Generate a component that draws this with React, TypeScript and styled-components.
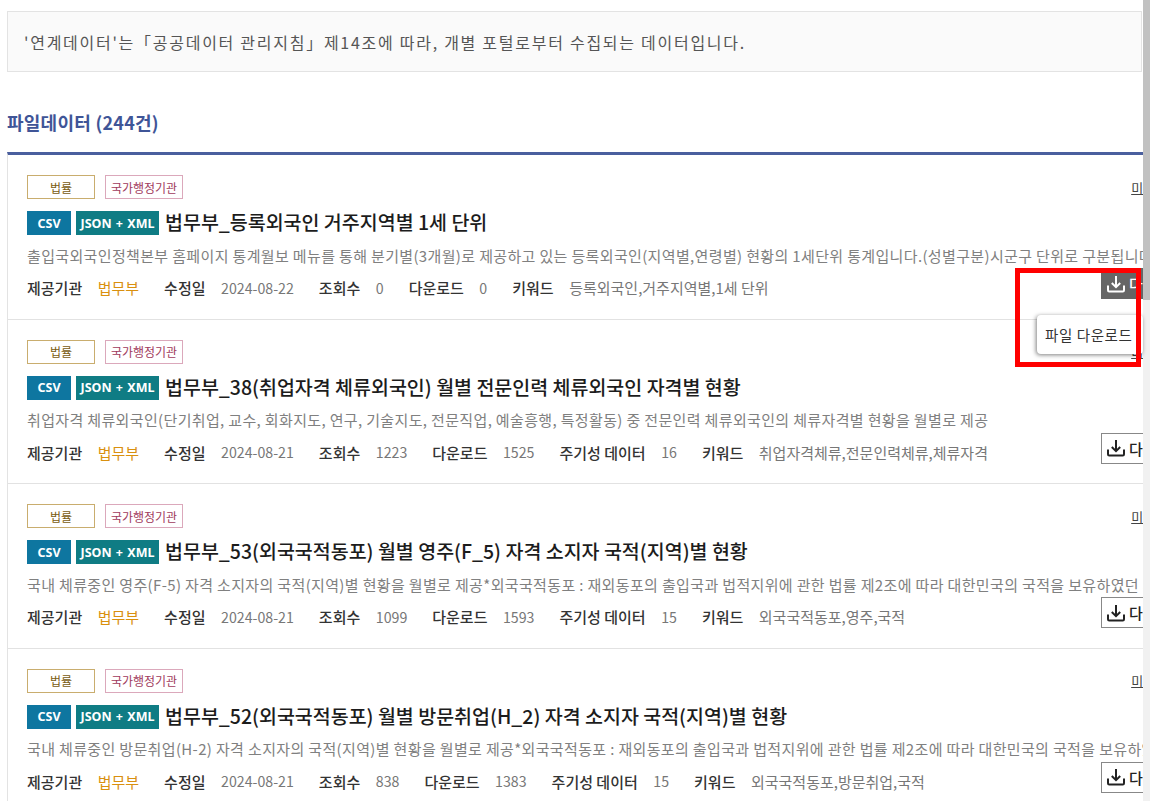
import React from 'react';
import styled, { createGlobalStyle } from 'styled-components';

const Global = createGlobalStyle`
  html, body { margin: 0; padding: 0; height: 100%; overflow: hidden; background: #fff; }
  body { font-family: "Noto Sans CJK KR", "Noto Sans", sans-serif; color: #222; }
`;
const Page = styled.div`
  display: flex; width: 1150px; height: 801px; overflow: hidden; position: relative;
`;
const Main = styled.main`
  width: 1143px; height: 801px; flex: none; overflow: hidden;
  padding: 11px 0 0 7px; box-sizing: border-box;
`;
const ScrollTrack = styled.div`
  width: 7px; flex: none; background: #f1f1f1;
`;
const ScrollThumb = styled.div`
  height: 300px; background: #c1c1c1;
`;
const Notice = styled.div`
  width: 1135px; height: 61px; box-sizing: border-box;
  background: #fafafa; border: 1px solid #e3e3e3;
  display: flex; align-items: center; padding-left: 16px;
  font-size: 16px; letter-spacing: 1.73px; color: #555; white-space: nowrap;
`;
const Heading = styled.h2`
  margin: 36px 0 16px; height: 28px; line-height: 28px;
  font-size: 18px; letter-spacing: .25px; font-weight: 700; color: #3f5597;
`;
const List = styled.div`
  width: 1300px; border-top: 3px solid #4a5f9e; border-left: 1px solid #e3e3e3;
`;
const Row = styled.article`
  box-sizing: border-box; height: 164.5px; width: 1170px;
  padding: 20px 0 0 19px; border-bottom: 1px solid #e2e2e2;
`;
const TopLine = styled.div`
  display: flex; justify-content: space-between; align-items: center; height: 24px;
`;
const Tags = styled.div`
  display: flex; gap: 10px;
`;
const Tag = styled.span<{ $c: string; $b: string; $w: number }>`
  box-sizing: border-box; width: ${p => p.$w}px; height: 24px;
  display: flex; align-items: center; justify-content: center;
  font-size: 12px; color: ${p => p.$c}; border: 1px solid ${p => p.$b};
`;
const MoreLink = styled.a`
  font-size: 13px; color: #444; text-decoration: underline; white-space: nowrap; margin-right: -1px;
`;
const TitleLine = styled.div`
  display: flex; align-items: center; margin-top: 12px; height: 24px; white-space: nowrap;
`;
const Format = styled.span<{ $bg: string; $w: number; $mr: number }>`
  box-sizing: border-box; width: ${p => p.$w}px; height: 24px; margin-right: ${p => p.$mr}px;
  background: ${p => p.$bg}; color: #fff; font-size: 12.5px; font-weight: 700; word-spacing: 1px;
  display: flex; align-items: center; justify-content: center; flex: none;
  font-family: "Noto Sans", sans-serif;
`;
const Title = styled.h3`
  margin: -2px 0 0; font-size: 19.5px; font-weight: 500; color: #1c1c1c; line-height: 24px;
`;
const Desc = styled.p`
  margin: 9.5px 0 0; font-size: 15px; letter-spacing: .35px; line-height: 22px; color: #808080; white-space: nowrap;
`;
const MetaLine = styled.div`
  display: flex; justify-content: space-between; align-items: center;
  margin-top: 5px; height: 32px;
`;
const Meta = styled.dl`
  display: flex; align-items: center; margin: 0; white-space: nowrap;
`;
const Label = styled.dt`
  font-size: 15px; font-weight: 500; color: #333; margin-right: 15.5px;
`;
const Value = styled.dd<{ $size: number; $accent?: boolean }>`
  margin: 0 25px 0 0; font-size: ${p => p.$size}px;
  color: ${p => (p.$accent ? '#d9900f' : '#777')};
`;
const Download = styled.button<{ $dark?: boolean }>`
  box-sizing: border-box; width: 77px; height: 31px; flex: none; padding: 0 0 0 5px;
  align-self: flex-start; margin-top: -3.5px;
  display: flex; align-items: center; gap: 4px; white-space: nowrap; overflow: hidden;
  font: 500 15px "Noto Sans CJK KR", sans-serif;
  border: 1px solid ${p => (p.$dark ? '#666' : '#888')};
  background: ${p => (p.$dark ? '#666' : '#fff')};
  color: ${p => (p.$dark ? '#fff' : '#222')};
`;
const Tooltip = styled.div`
  position: absolute; left: 1037px; top: 315px; width: 106px; height: 39px; box-sizing: border-box;
  background: #fff; border-radius: 4px; box-shadow: -1px 1px 4px rgba(0,0,0,.5);
  display: flex; align-items: center; padding-left: 8px;
  font-size: 14.5px; letter-spacing: .6px; color: #333; white-space: nowrap;
`;
const Highlight = styled.div`
  position: absolute; left: 1015px; top: 268px; width: 126px; height: 99px; box-sizing: border-box;
  border: 5px solid #f00;
`;

const DownloadIcon = () => (
  <svg width="18" height="18" viewBox="0 0 18 18" fill="none" stroke="currentColor" strokeWidth="2" style={{ flex: 'none' }}>
    <path d="M9 1v11M4.8 8 9 12.2 13.2 8" />
    <path d="M1 10.5v4.8c0 .8.5 1.2 1.2 1.2h13.6c.7 0 1.2-.4 1.2-1.2v-4.8" />
  </svg>
);

type M = [string, string];
const rows: { title: string; desc: string; meta: M[]; }[] = [
  { title: '법무부_등록외국인 거주지역별 1세 단위',
    desc: '출입국외국인정책본부 홈페이지 통계월보 메뉴를 통해 분기별(3개월)로 제공하고 있는 등록외국인(지역별,연령별) 현황의 1세단위 통계입니다.(성별구분)시군구 단위로 구분됩니다',
    meta: [['수정일','2024-08-22'],['조회수','0'],['다운로드','0'],['키워드','등록외국인,거주지역별,1세 단위']] },
  { title: '법무부_38(취업자격 체류외국인) 월별 전문인력 체류외국인 자격별 현황',
    desc: '취업자격 체류외국인(단기취업, 교수, 회화지도, 연구, 기술지도, 전문직업, 예술흥행, 특정활동) 중 전문인력 체류외국인의 체류자격별 현황을 월별로 제공',
    meta: [['수정일','2024-08-21'],['조회수','1223'],['다운로드','1525'],['주기성 데이터','16'],['키워드','취업자격체류,전문인력체류,체류자격']] },
  { title: '법무부_53(외국국적동포) 월별 영주(F_5) 자격 소지자 국적(지역)별 현황',
    desc: '국내 체류중인 영주(F-5) 자격 소지자의 국적(지역)별 현황을 월별로 제공*외국국적동포 : 재외동포의 출입국과 법적지위에 관한 법률 제2조에 따라 대한민국의 국적을 보유하였던 자',
    meta: [['수정일','2024-08-21'],['조회수','1099'],['다운로드','1593'],['주기성 데이터','15'],['키워드','외국국적동포,영주,국적']] },
  { title: '법무부_52(외국국적동포) 월별 방문취업(H_2) 자격 소지자 국적(지역)별 현황',
    desc: '국내 체류중인 방문취업(H-2) 자격 소지자의 국적(지역)별 현황을 월별로 제공*외국국적동포 : 재외동포의 출입국과 법적지위에 관한 법률 제2조에 따라 대한민국의 국적을 보유하였던 자',
    meta: [['수정일','2024-08-21'],['조회수','838'],['다운로드','1383'],['주기성 데이터','15'],['키워드','외국국적동포,방문취업,국적']] },
];

export default function App() {
  return (
    <Page>
      <Global />
      <Main>
        <Notice>'연계데이터'는「공공데이터 관리지침」제14조에 따라, 개별 포털로부터 수집되는 데이터입니다.</Notice>
        <Heading>파일데이터 (244건)</Heading>
        <List>
          {rows.map((r, i) => (
            <Row key={i}>
              <TopLine>
                <Tags>
                  <Tag $c="#7a5c12" $b="#c9ad6e" $w={68}>법률</Tag>
                  <Tag $c="#a03a5c" $b="#dba8bb" $w={78}>국가행정기관</Tag>
                </Tags>
                <MoreLink>미리보기</MoreLink>
              </TopLine>
              <TitleLine>
                <Format $bg="#0e76a0" $w={44} $mr={5}>CSV</Format>
                <Format $bg="#0f7c84" $w={83} $mr={6}>JSON + XML</Format>
                <Title>{r.title}</Title>
              </TitleLine>
              <Desc>{r.desc}</Desc>
              <MetaLine>
                <Meta>
                  <Label>제공기관</Label>
                  <Value $accent $size={15}>법무부</Value>
                  {r.meta.map(([k, v]) => (
                    <React.Fragment key={k}>
                      <Label>{k}</Label>
                      <Value $size={k === '키워드' ? 15 : 14.2}>{v}</Value>
                    </React.Fragment>
                  ))}
                </Meta>
                <Download $dark={i === 0}><DownloadIcon />다운로드</Download>
              </MetaLine>
            </Row>
          ))}
        </List>
      </Main>
      <ScrollTrack><ScrollThumb /></ScrollTrack>
      <Tooltip>파일 다운로드</Tooltip>
      <Highlight />
    </Page>
  );
}
